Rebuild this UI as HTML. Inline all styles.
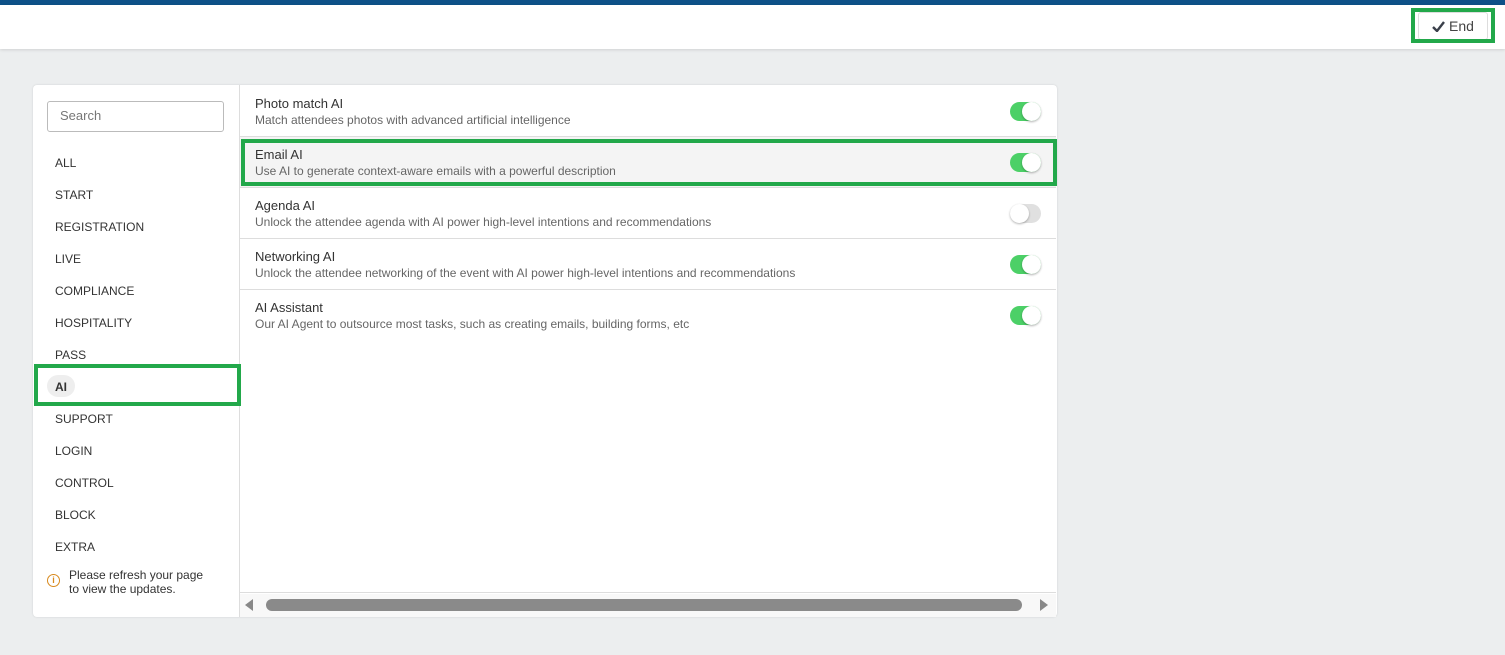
<!DOCTYPE html>
<html><head><style>
body{margin:0;width:1505px;height:655px;background:#eceeef;font-family:"Liberation Sans",sans-serif;position:relative;overflow:hidden;color:#333}
.top{position:absolute;left:0;top:0;width:1505px;height:5px;background:#0e5188}
.hdr{position:absolute;left:0;top:5px;width:1505px;height:44px;background:#fff;box-shadow:0 1px 3px rgba(0,0,0,.12)}
.g{position:absolute;border:4px solid #22a84a;box-sizing:border-box}
.btn{position:absolute;left:1418px;top:12px;width:70px;height:28px;border:1px solid #ddd;border-radius:3px;background:#fff;box-sizing:border-box;font-size:14px;color:#444;line-height:26px;text-align:center}
.card{position:absolute;left:33px;top:85px;width:1024px;height:532px;background:#fff;border-radius:4px;box-shadow:0 0 2px rgba(0,0,0,.12)}
.side{position:absolute;left:33px;top:85px;width:206px;height:532px;border-right:1px solid #ddd}
.search{position:absolute;left:47px;top:101px;width:177px;height:31px;border:1px solid #bbb;border-radius:3px;box-sizing:border-box;font-size:13px;color:#777;padding:6px 12px}
.it{position:absolute;left:55px;font-size:12px;color:#333}
.row{position:absolute;left:240px;width:816px;height:50px;border-bottom:1px solid #ddd;background:#fff}
.row .t{position:absolute;left:15px;top:10px;font-size:13px;color:#333}
.row .d{position:absolute;left:15px;top:27px;font-size:12px;color:#666}
.tg{position:absolute;left:770px;top:16px;width:31px;height:19px;border-radius:10px;background:#4cd067}
.tg::after{content:"";position:absolute;right:0;top:0;width:19px;height:19px;border-radius:50%;background:#fff;box-shadow:0 1px 2px rgba(0,0,0,.3)}
.tg.off{background:#e0e0e0}.tg.off::after{left:0;right:auto}
</style></head><body>
<div class="top"></div><div class="hdr"></div>
<div class="btn"><svg width="13" height="11" viewBox="0 0 13 11" style="vertical-align:-1px"><path d="M1 6l4 4 7-9" stroke="#3a3f4a" stroke-width="2.4" fill="none"/></svg> End</div>
<div class="g" style="left:1411px;top:8px;width:84px;height:35px"></div>
<div class="card"></div>
<div class="side"></div>
<div class="search">Search</div>
<div class="it" style="top:156px">ALL</div>
<div class="it" style="top:188px">START</div>
<div class="it" style="top:220px">REGISTRATION</div>
<div class="it" style="top:252px">LIVE</div>
<div class="it" style="top:284px">COMPLIANCE</div>
<div class="it" style="top:316px">HOSPITALITY</div>
<div class="it" style="top:348px">PASS</div>
<div style="position:absolute;left:47px;top:375px;width:28px;height:22px;border-radius:11px;background:#eee"></div>
<div class="it" style="top:380px;font-weight:bold">AI</div>
<div class="g" style="left:34px;top:364px;width:207px;height:42px"></div>
<div class="it" style="top:412px">SUPPORT</div>
<div class="it" style="top:444px">LOGIN</div>
<div class="it" style="top:476px">CONTROL</div>
<div class="it" style="top:508px">BLOCK</div>
<div class="it" style="top:540px">EXTRA</div>
<div style="position:absolute;left:47px;top:574px;width:11px;height:11px;border:1.5px solid #d88a1e;border-radius:50%;font-size:9px;color:#d88a1e;text-align:center;line-height:11px;font-weight:bold">i</div>
<div style="position:absolute;left:69px;top:568px;font-size:12px;line-height:14px;color:#333">Please refresh your page<br>to view the updates.</div>
<div class="row" style="top:86px"><div class="t">Photo match AI</div><div class="d">Match attendees photos with advanced artificial intelligence</div><div class="tg"></div></div>
<div class="row" style="top:137px;background:#f4f4f4"><div class="t">Email AI</div><div class="d">Use AI to generate context-aware emails with a powerful description</div><div class="tg"></div></div>
<div class="g" style="left:241px;top:139px;width:816px;height:47px"></div>
<div class="row" style="top:188px"><div class="t">Agenda AI</div><div class="d">Unlock the attendee agenda with AI power high-level intentions and recommendations</div><div class="tg off"></div></div>
<div class="row" style="top:239px"><div class="t">Networking AI</div><div class="d">Unlock the attendee networking of the event with AI power high-level intentions and recommendations</div><div class="tg"></div></div>
<div class="row" style="top:290px;border-bottom:none"><div class="t">AI Assistant</div><div class="d">Our AI Agent to outsource most tasks, such as creating emails, building forms, etc</div><div class="tg"></div></div>
<div style="position:absolute;left:240px;top:592px;width:816px;height:1px;background:#ddd"></div>
<div style="position:absolute;left:240px;top:594px;width:816px;height:23px;background:#f8f8f8"></div>
<div style="position:absolute;left:245px;top:599px;width:0;height:0;border-top:6px solid transparent;border-bottom:6px solid transparent;border-right:8px solid #888"></div>
<div style="position:absolute;left:266px;top:599px;width:756px;height:12px;border-radius:6px;background:#8a8a8a"></div>
<div style="position:absolute;left:1040px;top:599px;width:0;height:0;border-top:6px solid transparent;border-bottom:6px solid transparent;border-left:8px solid #888"></div>
</body></html>
